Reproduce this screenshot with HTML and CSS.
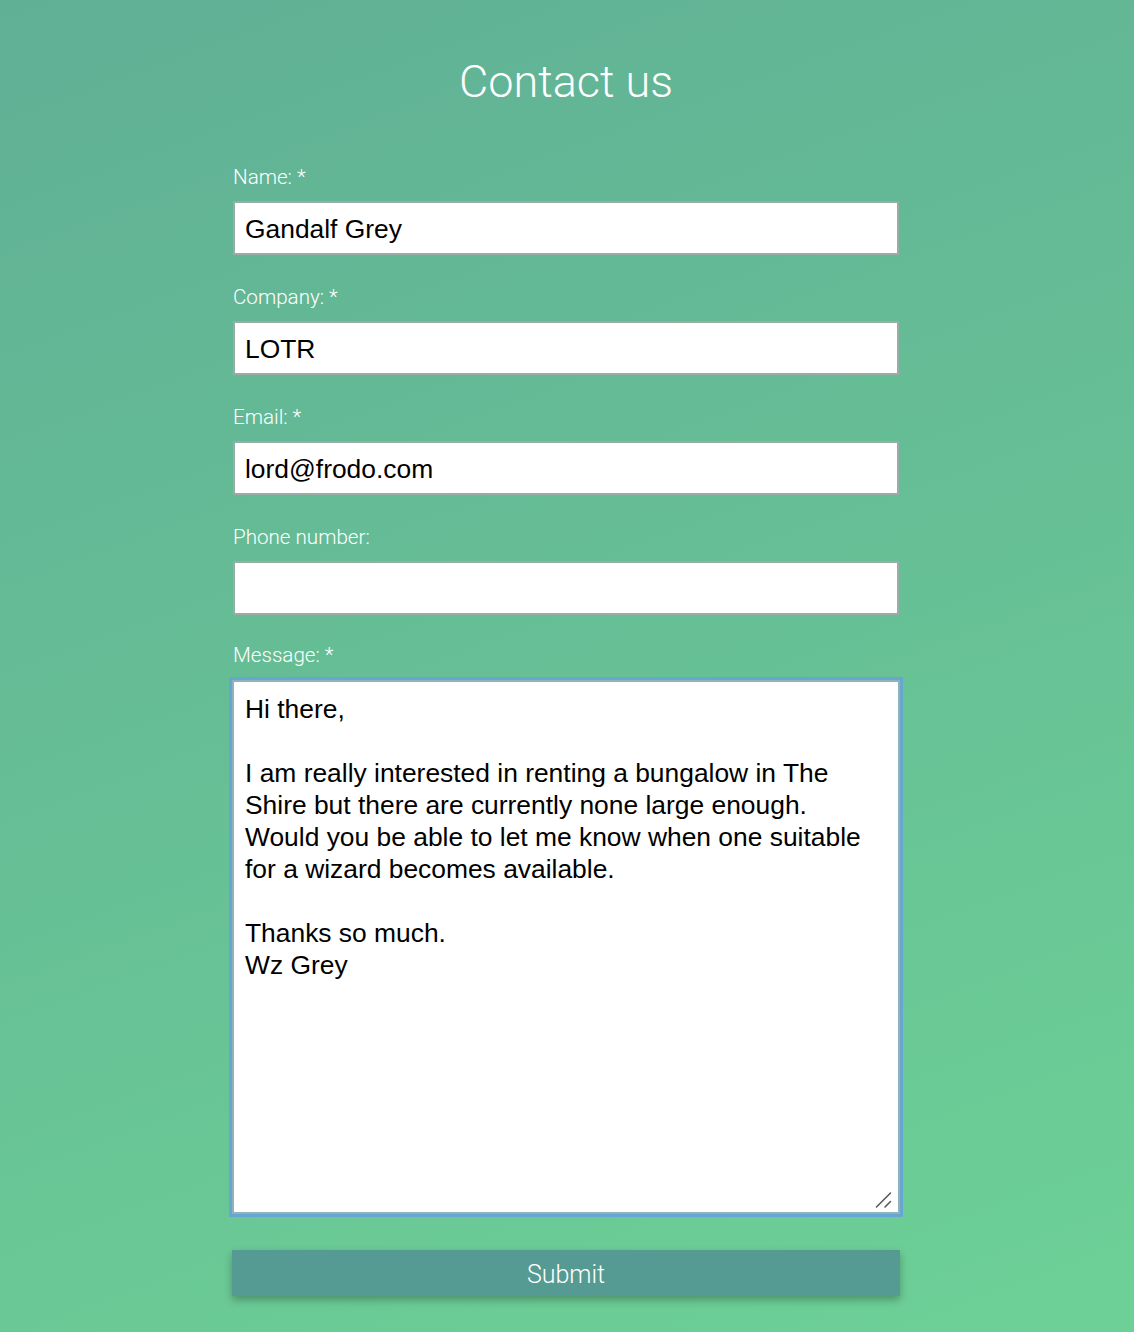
FILE: index.html
```html
<!DOCTYPE html>
<html lang="en">
<head>
<meta charset="utf-8">
<title>Contact us</title>
<link rel="stylesheet" href="styles.css">
</head>
<body>
<main class="page">
  <h1 class="title">Contact us</h1>
  <form class="form">
    <div class="field">
      <label class="label" for="name">Name: *</label>
      <input class="input" id="name" type="text" value="Gandalf Grey">
    </div>
    <div class="field">
      <label class="label" for="company">Company: *</label>
      <input class="input" id="company" type="text" value="LOTR">
    </div>
    <div class="field">
      <label class="label" for="email">Email: *</label>
      <input class="input" id="email" type="text" value="lord@frodo.com">
    </div>
    <div class="field">
      <label class="label" for="phone">Phone number:</label>
      <input class="input" id="phone" type="text" value="">
    </div>
    <div class="field field-message">
      <label class="label label-message" for="message">Message: *</label>
      <div class="textarea-wrap">
        <textarea class="textarea" id="message">Hi there,

I am really interested in renting a bungalow in The Shire but there are currently none large enough. Would you be able to let me know when one suitable for a wizard becomes available.

Thanks so much.
Wz Grey</textarea>
        <svg class="grip" width="18" height="18" viewBox="0 0 18 18" aria-hidden="true">
          <line x1="2.5" y1="16" x2="16.5" y2="2" stroke="#5a5a5a" stroke-width="1.6" stroke-linecap="round"/>
          <line x1="11" y1="16" x2="16.5" y2="10.5" stroke="#5a5a5a" stroke-width="1.6" stroke-linecap="round"/>
        </svg>
      </div>
    </div>
    <button class="submit" type="button">Submit</button>
  </form>
</main>
</body>
</html>
```
FILE: styles.css
```css
html, body {
  margin: 0;
  padding: 0;
}
body {
  min-height: 1332px;
  background: linear-gradient(160deg, #60b095 0%, #66bf95 50%, #6dd196 100%);
  font-family: "Liberation Sans", Arial, sans-serif;
}
.page {
  width: 668px;
  margin: 0 auto;
  padding-top: 55px;
  position: relative;
  left: -1px;
}
.title {
  margin: 0;
  font-family: Roboto, "Liberation Sans", sans-serif;
  font-weight: 300;
  font-size: 45px;
  line-height: 54px;
  color: #ffffff;
  text-align: center;
}
.form {
  display: flex;
  flex-direction: column;
  margin-top: 56px;
}
.field {
  display: flex;
  flex-direction: column;
  margin-bottom: 30px;
  padding: 0 1px;
}
.field-message {
  margin-top: -2px;
  margin-bottom: 36px;
  padding: 0;
}
.label {
  font-family: Roboto, "Liberation Sans", sans-serif;
  font-weight: 300;
  font-size: 20.6px;
  line-height: 24px;
  color: #ffffff;
  margin-bottom: 12px;
}
.label-message {
  margin-bottom: 13px;
  padding-left: 1px;
}
.input,
.textarea {
  box-sizing: border-box;
  width: 100%;
  margin: 0;
  border: 2px solid #9aaca6;
  background: #ffffff;
  color: #000000;
  font-family: "Liberation Sans", Arial, sans-serif;
  font-size: 26.4px;
  border-radius: 0;
}
.input {
  height: 54px;
  padding: 2px 10px 0;
  outline: none;
}
.textarea-wrap {
  position: relative;
  display: flex;
}
.textarea {
  display: block;
  height: 534px;
  padding: 11px 10px 10px 11px;
  line-height: 32px;
  resize: none;
  outline: 3px solid #67a6d1;
  outline-offset: 0;
  border-color: #8eb3b8;
}
.grip {
  position: absolute;
  right: 8px;
  bottom: 5px;
  pointer-events: none;
}
.submit {
  box-sizing: border-box;
  width: 668px;
  height: 46px;
  border: none;
  padding: 2px 0 0;
  background: #569a94;
  color: #ffffff;
  font-family: Roboto, "Liberation Sans", sans-serif;
  font-weight: 300;
  font-size: 25px;
  box-shadow: 0 4px 8px rgba(0, 0, 0, 0.28);
  cursor: pointer;
}
```
